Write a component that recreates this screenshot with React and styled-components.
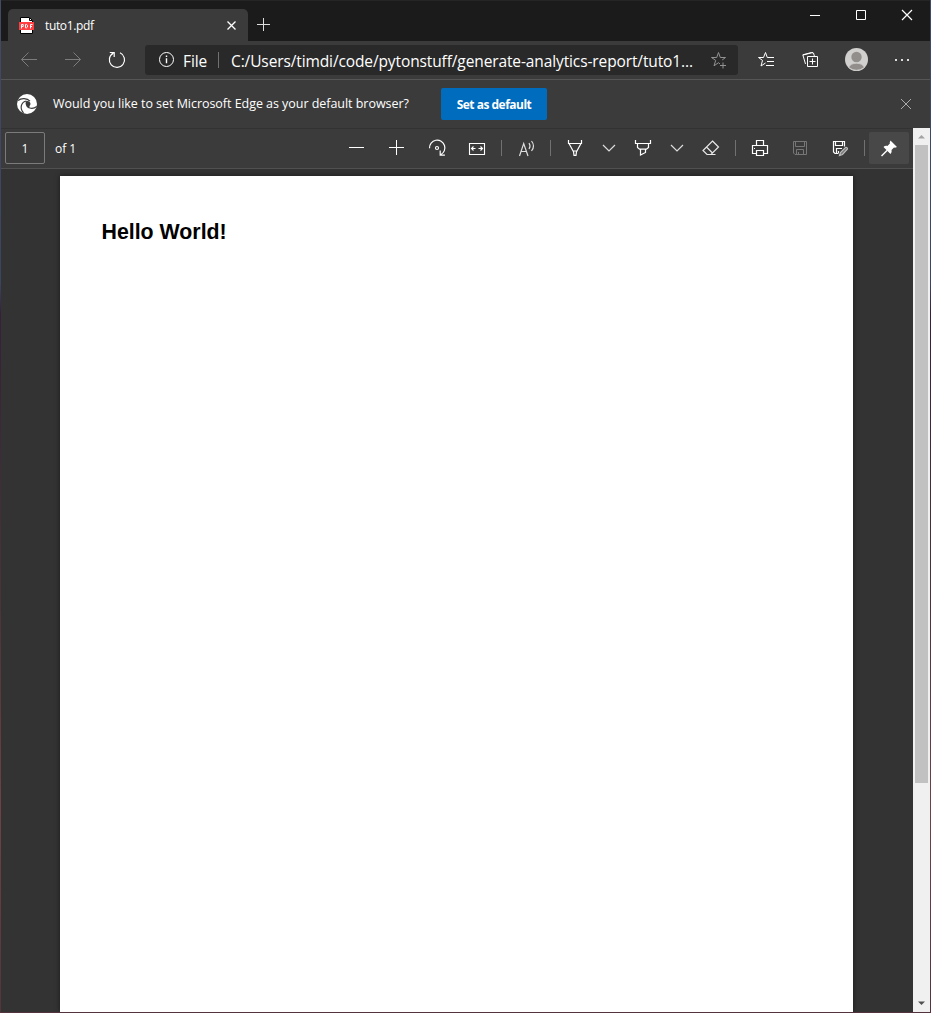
import React from "react";
import styled, { createGlobalStyle } from "styled-components";

const Global = createGlobalStyle`
  *, *::before, *::after { box-sizing: border-box; }
  html, body { margin: 0; padding: 0; overflow: hidden; background: #333; }
  body { font-family: "Open Sans", "Noto Sans", sans-serif; color: #fff; }
`;

const Desktop = styled.div`
  width: 931px;
  height: 1013px;
  padding: 0 1px 1px;
  background: linear-gradient(#434a66 0, #3c4464 28%, #35203a 31%, #4d3338 60%, #6e4148 80%, #54343c 100%);
`;
const Window = styled.div`
  display: flex;
  flex-direction: column;
  width: 929px;
  height: 1012px;
  background: #3b3b3b;
`;
const TitleBar = styled.header`
  display: flex;
  align-items: flex-end;
  height: 41px;
  padding-left: 7px;
  background: #1b1b1b;
  border-top: 1px solid #252525;
`;
const Tab = styled.div`
  display: flex;
  align-items: center;
  width: 240px;
  height: 32px;
  padding: 0 8px 0 10px;
  border-radius: 5px 5px 0 0;
  background: #3b3b3b;
`;
const TabTitle = styled.span`
  flex: 1;
  margin-left: 10px;
  padding-top: 1px;
  font-size: 12px;
  line-height: 16px;
  letter-spacing: -0.35px;
`;
const NewTab = styled.div`
  display: flex;
  margin: 0 0 5px 4px;
`;
const WindowControls = styled.div`
  display: flex;
  align-self: flex-start;
  margin-left: auto;
  height: 28px;
`;
const Cell = styled.button`
  display: flex;
  flex: none;
  align-items: center;
  justify-content: center;
  width: ${(p) => p.$w || 40}px;
  height: ${(p) => p.$h || 32}px;
  margin: 0 0 0 ${(p) => p.$gap || 0}px;
  padding: 0;
  border: 0;
  border-radius: 2px;
  background: ${(p) => (p.$active ? "#484848" : "transparent")};
  color: ${(p) => p.$color || "#fff"};
`;
const Glyph = styled.svg`
  display: block;
  flex: none;
  overflow: visible;
  fill: none;
  stroke: currentColor;
  stroke-width: ${(p) => p.$sw || 1};
`;
const AddressRow = styled.div`
  display: flex;
  align-items: center;
  height: 39px;
  padding-left: 6px;
  border-bottom: 1px solid #565656;
`;
const AddressBar = styled.div`
  display: flex;
  align-items: center;
  width: 593px;
  height: 30px;
  margin: 0 6px;
  padding-left: 10px;
  border-radius: 3px;
  background: #292929;
  font-size: 15.5px;
`;
const Scheme = styled.span`
  width: 34px;
  margin-left: 4px;
  padding-top: 1px;
  white-space: nowrap;
  letter-spacing: -0.1px;
`;
const Address = styled.span`
  width: 476px;
  padding-top: 1px;
  white-space: nowrap;
  letter-spacing: -0.115px;
`;
const Rule = styled.i`
  flex: none;
  width: 1px;
  height: 16px;
  margin: ${(p) => p.$m || "0"};
  background: #717171;
`;
const InfoBar = styled.div`
  display: flex;
  align-items: center;
  height: 48px;
  padding: 0 12px 0 14px;
`;
const Prompt = styled.span`
  width: 388px;
  margin-left: 14px;
  padding-bottom: 1px;
  white-space: nowrap;
  font-size: 12.5px;
  letter-spacing: -0.04px;
`;
const DefaultButton = styled.button`
  width: 106px;
  height: 32px;
  padding: 0;
  border: 0;
  border-radius: 2px;
  background: #006cbe;
  color: #fff;
  white-space: nowrap;
  font: 700 12px "Open Sans", sans-serif;
  letter-spacing: -0.5px;
`;
const Dismiss = styled.div`
  display: flex;
  margin-left: auto;
`;
const Viewer = styled.div`
  display: flex;
  flex: 1;
  min-height: 0;
`;
const Document = styled.div`
  display: flex;
  flex-direction: column;
  width: 912px;
  background: #333;
`;
const PdfToolbar = styled.div`
  display: flex;
  flex: none;
  align-items: center;
  height: 41px;
  padding: 0 4px 1px;
  border-top: 1px solid #323232;
  border-bottom: 1px solid #505050;
  background: #3b3b3b;
  font-size: 12px;
`;
const PageField = styled.div`
  width: 40px;
  height: 32px;
  border: 1px solid #7b7b7b;
  border-radius: 2px;
  line-height: 32px;
  text-align: center;
`;
const PageCount = styled.span`
  width: 281px;
  margin-left: 10px;
`;
const Canvas = styled.div`
  flex: 1;
  min-height: 0;
  padding: 7px 0 0 59px;
  overflow: hidden;
`;
const Paper = styled.main`
  width: 793px;
  height: 100%;
  padding: 43px 0 0 41.5px;
  background: #fff;
  box-shadow: 0 0 5px rgba(0, 0, 0, 0.5);
`;
const Heading = styled.h1`
  margin: 0;
  color: #000;
  font: 700 21.33px/26px "Liberation Sans", Arial, sans-serif;
`;
const Scrollbar = styled.div`
  display: flex;
  flex-direction: column;
  justify-content: space-between;
  align-items: center;
  width: 17px;
  background: #f0f0f0;
`;
const ScrollArrow = styled.div`
  display: flex;
  align-items: center;
  justify-content: center;
  width: 17px;
  height: 17px;
`;
const Thumb = styled.div`
  width: 13px;
  height: 638px;
  margin-bottom: auto;
  background: #c1c1c1;
`;

function Icon({ children, size = 24, sw }) {
  return (
    <Glyph width={size} height={size} viewBox={`0 0 ${size} ${size}`} $sw={sw} aria-hidden="true">
      {children}
    </Glyph>
  );
}

const Chevron = () => (
  <Icon sw={1.2}><path d="M6 9l6 6 6-6" /></Icon>
);

export default function App() {
  return (
    <Desktop>
      <Global />
      <Window>
        <TitleBar>
          <Tab>
            <Icon size={17}>
              <path d="M2.5.5h9l3 3v13h-12z" fill="#fff" stroke="#000" />
              <path d="M11.500 1v2.500H14" stroke="#000" />
              <path d="M1 5h15v8H1z" fill="#ff3e41" stroke="none" />
              <path d="M3.500 11.500V7.500h1.700v2H3.500M7.500 7.500h1.200l.8.8v1.700l-.8.800H7.500zM12.500 11.500v-4h2M12.500 9.500h1.500" stroke="#fff" />
            </Icon>
            <TabTitle>tuto1.pdf</TabTitle>
            <Icon size={16}><path d="M3.500 4.500l8 8M11.500 4.500l-8 8" strokeWidth="1.300" /></Icon>
          </Tab>
          <NewTab><Icon><path d="M5 12.500h13M11.500 6v13" stroke="#ddd" /></Icon></NewTab>
          <WindowControls>
            <Cell $w={46} $h={28}><Icon><path d="M7 12.500h10" /></Icon></Cell>
            <Cell $w={46} $h={28}><Icon><path d="M7.500 7.500h9v9h-9z" /></Icon></Cell>
            <Cell $w={46} $h={28}><Icon sw={1.2}><path d="M7 7l10 10M17 7L7 17" /></Icon></Cell>
          </WindowControls>
        </TitleBar>

        <AddressRow>
          <Cell $w={44} $color="#7c7c7c"><Icon><path d="M4.500 11.500H20M11.500 4.500l-7 7 7 7" /></Icon></Cell>
          <Cell $w={44} $color="#7c7c7c"><Icon><path d="M4 11.500h15.500M12.500 4.500l7 7-7 7" /></Icon></Cell>
          <Cell $w={44}><Icon sw={1.2}><path d="M8.300 5.100A7.600 7.600 0 1 0 15 4.800M4.800 4.500h4.400V9" /></Icon></Cell>
          <AddressBar>
            <Icon>
              <circle cx="11.5" cy="11.5" r="7" />
              <path d="M11.500 10.200v5M11.500 7.500v1.400" strokeWidth="1.400" />
            </Icon>
            <Scheme>File</Scheme>
            <Rule $m="0 12px 0 1px" />
            <Address>C:/Users/timdi/code/pytonstuff/generate-analytics-report/tuto1...</Address>
            <Cell $w={24} $color="#929292">
              <Icon>
                <path d="M13 16l-1.500-1.300L7 17.800l1.700-5.400L4.500 9.500h5.200L11.500 4.500l1.800 5h5.200l-3.300 2.500M13 17.500h6M16 14.500v6" />
              </Icon>
            </Cell>
          </AddressBar>
          <Cell $w={45}>
            <Icon><path d="M10.500 15L6 18l1.500-5.600L3.500 9.500h5L10.500 4.500l1.800 5H19M12 13.500h7M11 17.500h8" /></Icon>
          </Cell>
          <Cell $w={45}>
            <Icon><path d="M7.500 8.500h10v10h-10zM12.500 10.500v6M9.500 13.500h6M5.500 16L2.800 6.800l8.700-2.300 2 .5 1 3.500M3 7l10-2.500" /></Icon>
          </Cell>
          <Cell $w={45}>
            <Icon>
              <circle cx="11.5" cy="11.5" r="11.5" fill="#d2d0ce" stroke="none" />
              <circle cx="11.5" cy="9" r="5.2" fill="#918e8c" stroke="none" />
              <path d="M3.700 19.500C5.200 13.800 17.800 13.800 19.300 19.500Q11.500 25 3.700 19.500z" fill="#918e8c" stroke="#d2d0ce" strokeWidth=".8" />
            </Icon>
          </Cell>
          <Cell $w={45}>
            <Icon><path d="M5 11h2v2H5zM11 11h2v2h-2zM17 11h2v2h-2z" fill="#ddd" stroke="none" /></Icon>
          </Cell>
        </AddressRow>

        <InfoBar>
          <Icon>
            <circle cx="12" cy="12" r="10" fill="#fff" stroke="none" />
            <path d="M3 8.500C6.500 5.600 12 6 15 9.200M8.500 21C4 15.500 6.500 10 11.500 9M21.800 14.500C18 17.500 13 16.500 11.500 13.500" stroke="#3b3b3b" strokeWidth="1.200" />
            <path d="M11.500 9c2.300-.5 4.200 1.200 4 3-.1 1.300-1.200 1.700-1 3.200-3.600-.2-5-4.200-3-6.200z" fill="#3b3b3b" stroke="none" />
          </Icon>
          <Prompt>Would you like to set Microsoft Edge as your default browser?</Prompt>
          <DefaultButton>Set as default</DefaultButton>
          <Dismiss><Icon><path d="M7 7l10 10M17 7L7 17" stroke="#aaa" /></Icon></Dismiss>
        </InfoBar>

        <Viewer>
          <Document>
            <PdfToolbar>
              <PageField>1</PageField>
              <PageCount>of 1</PageCount>
              <Cell><Icon><path d="M5 11.500h15" /></Icon></Cell>
              <Cell><Icon><path d="M5 11.500h15M12.500 4v15" /></Icon></Cell>
              <Cell $w={42}>
                <Icon sw={1.2}>
                  <path d="M4.500 12.300A7.700 7.700 0 1 1 15.500 18.800M15.200 14.500v4.700h4.700" />
                  <circle cx="12" cy="12" r="1.5" />
                </Icon>
              </Cell>
              <Cell $w={38}>
                <Icon sw={1.1}><path d="M4.500 7.500h15v11h-15zM6.500 12.500h4M13.500 12.500h4M8.500 10.500l-2 2 2 2M15.500 10.500l2 2-2 2" /></Icon>
              </Cell>
              <Rule $m="0 4px 0 5px" />
              <Cell $color="#ddd">
                <Icon sw={1.2}><path d="M5.500 20l4.200-12.500L14 20M7.200 15.500h5.100M15 7q2 3 0 6M17.500 5q4 5 0 10" /></Icon>
              </Cell>
              <Rule $m="0 3px 0 4px" />
              <Cell $w={42}>
                <Icon sw={1.2}><path d="M5.500 4v3.500h13V4M6 7.500l4.500 8.200M18 7.500l-4.500 8.200M10 15h4M10.500 15.500l.5 3.800h2l.5-3.800" /></Icon>
              </Cell>
              <Cell $w={26} $color="#ddd"><Chevron /></Cell>
              <Cell $w={42}>
                <Icon sw={1.2}><path d="M4.500 4v3.500h15V4M6.500 7.500v4l2 1.700h7l2-1.700v-4M9.500 13v6l5-2.500V13" /></Icon>
              </Cell>
              <Cell $w={26} $color="#ddd"><Chevron /></Cell>
              <Cell $w={42} $color="#e8e8e8">
                <Icon sw={1.2}><path d="M13.500 5l6 6-7.500 7.500H8L4 14.500zM7.500 11l6 6M8 18.500h8.500" /></Icon>
              </Cell>
              <Rule $m="0 2px 0 3px" />
              <Cell $w={44}>
                <Icon sw={1.2}><path d="M8.500 9.500v-5h7v5M8 17.500H4.500v-8h15v8H16M8.500 14.500h7v5h-7zM6 12.500h1" /></Icon>
              </Cell>
              <Cell $w={36} $color="#777">
                <Icon><path d="M5.500 5.500h13v13H7l-1.500-1.500zM7.500 5.500v5h9v-5M8.500 18.500v-5h7v5M10.500 16v2.500" /></Icon>
              </Cell>
              <Cell $w={44}>
                <Icon sw={1.2}>
                  <path d="M10.500 17.500H7l-1.500-1.500V5.500h11v5M7.500 5.500v4h7v-4M8.500 17v-4.500h5.500M10.500 15v2" />
                  <path d="M11.500 19.500l1-3 5-5q2-.5 2 1.500l-5 5.500z" stroke="#bbb" fill="#777" />
                </Icon>
              </Cell>
              <Rule $m="0 1px 0 2px" />
              <Cell $gap={3} $active>
                <Icon>
                  <path d="M13.500 4.500l6.500 6.500-2 .8-1-.2-2.500 2.500c.4 1.500 0 2.900-1 3.900L6.500 11c1-1 2.400-1.400 3.900-1l2.500-2.500-.2-1z" fill="currentColor" stroke="none" />
                  <path d="M10.500 14L4.500 20" strokeWidth="1.500" />
                </Icon>
              </Cell>
            </PdfToolbar>
            <Canvas>
              <Paper><Heading>Hello World!</Heading></Paper>
            </Canvas>
          </Document>
          <Scrollbar>
            <ScrollArrow><Icon size={7}><path d="M0 5.500L3.500 2 7 5.500z" fill="#a3a3a3" stroke="none" /></Icon></ScrollArrow>
            <Thumb />
            <ScrollArrow><Icon size={7}><path d="M0 1.500L3.500 5 7 1.500z" fill="#505050" stroke="none" /></Icon></ScrollArrow>
          </Scrollbar>
        </Viewer>
      </Window>
    </Desktop>
  );
}
